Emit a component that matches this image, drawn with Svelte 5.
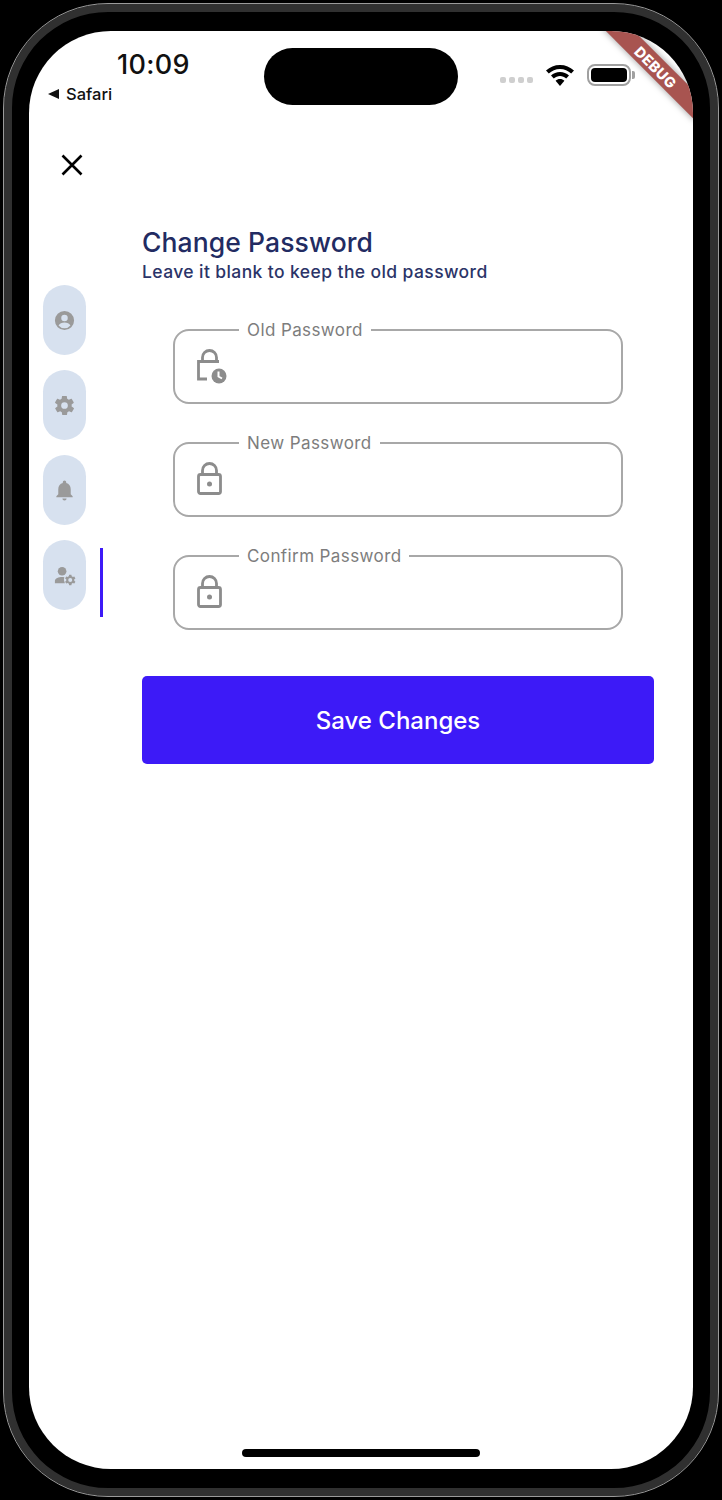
<script lang="ts">
	const tabs = ["profile", "settings", "bell", "admin"];
	const activeTab = "admin";
	const fields = [
		{ label: "Old Password", icon: "old" },
		{ label: "New Password", icon: "lock" },
		{ label: "Confirm Password", icon: "lock" },
	];
</script>

{#snippet tabIcon(key: string)}
	{#if key === "profile"}
		<svg viewBox="0 0 24 24"><path d="M12 2a10 10 0 1 0 0 20 10 10 0 0 0 0-20zm0 4a3.400 3.400 0 1 1 0 6.800A3.400 3.400 0 0 1 12 6zm0 14a8 8 0 0 1-6.200-2.900c.9-1.900 3.600-3 6.200-3s5.300 1.100 6.200 3A8 8 0 0 1 12 20z" /></svg>
	{:else if key === "settings"}
		<svg viewBox="0 0 24 24"><path d="M19.400 13c.05-.3.1-.65.1-1s-.05-.7-.1-1l2.100-1.650c.2-.15.25-.4.1-.65l-2-3.450c-.1-.2-.4-.3-.6-.2l-2.500 1c-.5-.4-1.100-.7-1.700-1l-.4-2.650c0-.2-.25-.4-.5-.4h-4c-.25 0-.45.2-.5.4l-.4 2.650c-.6.25-1.150.6-1.700 1l-2.500-1c-.2-.1-.5 0-.6.2l-2 3.450c-.1.25-.1.5.1.65L4.600 11c-.05.3-.1.650-.1 1s.05.7.1 1l-2.100 1.650c-.2.15-.25.4-.1.65l2 3.450c.1.2.4.3.6.2l2.500-1c.5.4 1.100.7 1.700 1l.4 2.650c.05.2.25.4.5.4h4c.25 0 .45-.2.5-.4l.4-2.650c.6-.25 1.150-.6 1.700-1l2.500 1c.2.1.5 0 .6-.2l2-3.450c.1-.25.1-.5-.1-.65zM12 15.500a3.500 3.500 0 1 1 0-7 3.500 3.500 0 0 1 0 7z" /></svg>
	{:else if key === "bell"}
		<svg viewBox="0 0 24 24"><path d="M12 22.500a2.200 2.200 0 0 0 2.200-2.200H9.800a2.200 2.200 0 0 0 2.200 2.200zM18.500 16v-5.400c0-3.200-1.700-5.800-4.700-6.500v-.7a1.800 1.800 0 0 0-3.600 0v.7c-3 .7-4.700 3.300-4.700 6.500V16L3.500 18v1h17v-1z" /></svg>
	{:else}
		<svg viewBox="0 0 24 24"><circle cx="9.500" cy="7.500" r="4.500" /><path d="M9.500 13.500c-3.500 0-7.500 1.700-7.500 3.800V20h10.400a7 7 0 0 1-.6-6.300c-.8-.15-1.600-.2-2.300-.2z" /><path fill-rule="evenodd" d="M22.200 16.700c0-.25 0-.45-.05-.7l1.250-1-1.200-2-1.500.5c-.35-.3-.75-.5-1.200-.65L19.200 11.300h-2.400l-.3 1.550c-.45.15-.85.35-1.200.65l-1.500-.5-1.200 2 1.250 1a4 4 0 0 0 0 1.400l-1.250 1 1.200 2 1.500-.5c.35.3.75.5 1.200.65l.3 1.550h2.400l.3-1.550c.45-.15.85-.35 1.200-.65l1.500.5 1.200-2-1.250-1c.05-.25.05-.45.05-.7zM18 18.800a2.100 2.100 0 1 1 0-4.200 2.100 2.100 0 0 1 0 4.200z" /></svg>
	{/if}
{/snippet}

<div class="device">
	<div class="bezel">
		<div class="screen">
			<div class="debug-banner"><span>DEBUG</span></div>

			<header class="status-bar">
				<div class="status-left">
					<span class="clock">10:09</span>
					<span class="back-app"><i class="back-arrow"></i>Safari</span>
				</div>
				<div class="island"></div>
				<div class="status-right">
					<span class="signal"><i></i><i></i><i></i><i></i></span>
					<svg class="wifi" viewBox="0 0 30 22">
						<path d="M15 1C9.500 1 5 3 1 6.500l2.800 3C6.800 6.800 10.700 5 15 5s8.200 1.800 11.200 4.500l2.800-3C25 3 20.500 1 15 1z" />
						<path d="M15 8c-3.500 0-6.600 1.300-9 3.500l2.800 3c1.700-1.500 3.900-2.500 6.200-2.500s4.500 1 6.200 2.500l2.800-3C21.600 9.300 18.500 8 15 8z" />
						<path d="M15 15c-1.700 0-3.200.6-4.400 1.700L15 22l4.400-5.300C18.200 15.600 16.700 15 15 15z" />
					</svg>
					<span class="battery"><i class="battery-level"></i></span>
					<i class="battery-cap"></i>
				</div>
			</header>

			<button class="close" type="button" aria-label="Close">
				<svg viewBox="0 0 24 24"><path d="M2.500 2.500l19 19M21.500 2.500l-19 19" /></svg>
			</button>

			<main class="layout">
				<nav class="side-nav">
					{#each tabs as tab}
						<div class="tab-row">
							<button class="tab" type="button" aria-label={tab}>
								{@render tabIcon(tab)}
							</button>
							{#if tab === activeTab}
								<span class="tab-marker"></span>
							{/if}
						</div>
					{/each}
				</nav>

				<section class="content">
					<h1>Change Password</h1>
					<p class="subtitle">Leave it blank to keep the old password</p>

					<div class="fields">
						{#each fields as field}
							<fieldset class="field">
								<legend>{field.label}</legend>
								{#if field.icon === "old"}
									<svg class="field-icon" viewBox="0 0 32 36">
										<path class="line" d="M12 32H3.500V14.500H24M7.500 14v-3.500a7 7 0 0 1 14 0V14" />
										<circle class="fill" cx="24" cy="29" r="7.500" />
										<path class="tick" d="M23.500 24.500v5l3.500 2" />
									</svg>
								{:else}
									<svg class="field-icon" viewBox="0 0 32 36">
										<rect class="line" x="3.500" y="14.500" width="22" height="19" rx="2" />
										<path class="line" d="M7.500 14v-3.500a7 7 0 0 1 14 0V14" />
										<circle class="fill" cx="14.500" cy="24" r="2.500" />
									</svg>
								{/if}
							</fieldset>
						{/each}
					</div>

					<button class="save" type="button">Save Changes</button>
				</section>
			</main>

			<div class="home-indicator"></div>
		</div>
	</div>
</div>

<style>
	:global(body) {
		margin: 0;
		background: #000;
	}

	.device {
		width: 722px;
		height: 1500px;
		box-sizing: border-box;
		padding: 3px;
		background: #000;
		font-family: "Inter", "Liberation Sans", sans-serif;
	}

	.bezel {
		height: 100%;
		box-sizing: border-box;
		padding: 27px 25px;
		border: 1px solid #9a9a9a;
		border-radius: 105px;
		background: #000;
		box-shadow: inset 0 0 0 8px #303030;
	}

	.screen {
		position: relative;
		display: flex;
		flex-direction: column;
		height: 100%;
		overflow: hidden;
		border-radius: 82px;
		background: #fff;
	}

	.debug-banner {
		position: absolute;
		top: 26px;
		right: -28px;
		width: 130px;
		height: 20px;
		display: flex;
		align-items: center;
		justify-content: center;
		background: #a85450;
		box-shadow: 0 0 7px rgba(0, 0, 0, 0.4);
		transform: rotate(45deg);
		color: #fff;
		font-size: 14.500px;
		font-weight: 800;
		letter-spacing: 0.4px;
	}

	.status-bar {
		display: flex;
		align-items: flex-start;
		height: 74px;
		flex-shrink: 0;
	}

	.status-left {
		display: flex;
		flex-direction: column;
		width: 235px;
		flex-shrink: 0;
		box-sizing: border-box;
		padding: 18px 0 0 19px;
	}

	.clock {
		margin-left: 69px;
		font-size: 27px;
		font-weight: 500;
		line-height: 31px;
		color: #111;
		letter-spacing: 0.3px;
	}

	.back-app {
		display: flex;
		align-items: center;
		gap: 7px;
		margin-top: 4px;
		font-size: 16.500px;
		font-weight: 500;
		line-height: 20px;
		color: #111;
	}

	.back-arrow {
		width: 0;
		height: 0;
		border-top: 5px solid transparent;
		border-bottom: 5px solid transparent;
		border-right: 11px solid #111;
	}

	.island {
		width: 194px;
		height: 57px;
		margin-top: 17px;
		flex-shrink: 0;
		border-radius: 29px;
		background: #000;
	}

	.status-right {
		display: flex;
		align-items: center;
		margin: 33px 0 0 42px;
	}

	.signal {
		display: flex;
		gap: 3px;
		margin-top: 10px;
	}

	.signal i {
		width: 6px;
		height: 6px;
		border-radius: 2px;
		background: #cfcfcf;
	}

	.wifi {
		width: 30px;
		height: 22px;
		margin-left: 12px;
		fill: #000;
	}

	.battery {
		display: flex;
		box-sizing: border-box;
		width: 44px;
		height: 22px;
		margin-left: 12px;
		padding: 2px;
		border: 2px solid #a0a0a0;
		border-radius: 8px;
	}

	.battery-level {
		flex: 1;
		border-radius: 4px;
		background: #000;
	}

	.battery-cap {
		width: 3px;
		height: 8px;
		margin-left: 1px;
		border-radius: 0 2px 2px 0;
		background: #a0a0a0;
	}

	.close {
		align-self: flex-start;
		width: 24px;
		height: 24px;
		margin: 48px 0 0 31px;
		padding: 0;
		border: 0;
		background: none;
	}

	.close svg {
		display: block;
		width: 24px;
		height: 24px;
		fill: none;
		stroke: #000;
		stroke-width: 2.600;
	}

	.layout {
		display: flex;
		align-items: flex-start;
		margin-top: 50px;
	}

	.side-nav {
		display: flex;
		flex-direction: column;
		gap: 15px;
		width: 113px;
		flex-shrink: 0;
		box-sizing: border-box;
		margin-top: 58px;
		padding-left: 14px;
	}

	.tab-row {
		position: relative;
		height: 70px;
	}

	.tab {
		display: flex;
		align-items: center;
		justify-content: center;
		width: 43px;
		height: 70px;
		padding: 0;
		border: 0;
		border-radius: 22px;
		background: #d7e1ef;
	}

	.tab svg {
		width: 23px;
		height: 23px;
		fill: #9a9a9a;
	}

	.tab-marker {
		position: absolute;
		left: 57px;
		top: 8px;
		width: 3px;
		height: 69px;
		background: #3d1af7;
	}

	.content {
		flex: 1;
		padding-right: 39px;
	}

	h1 {
		margin: 0;
		font-size: 26.500px;
		font-weight: 500;
		line-height: 30px;
		letter-spacing: 0.1px;
		color: #222b62;
	}

	.subtitle {
		margin: 4px 0 0;
		font-size: 17.500px;
		font-weight: 500;
		line-height: 22px;
		letter-spacing: 0.4px;
		color: #2b3468;
	}

	.fields {
		display: flex;
		flex-direction: column;
		gap: 40px;
		margin: 48px 31px 0;
	}

	.field {
		box-sizing: border-box;
		height: 85px;
		margin: -12px 0 0;
		padding: 0 0 0 22px;
		border: 2px solid #a8a8a8;
		border-radius: 16px;
		min-width: 0;
	}

	.field legend {
		margin-left: 42px;
		padding: 0 8px 0 8px;
		font-size: 17px;
		line-height: 22px;
		letter-spacing: 0.4px;
		color: #7d7d7d;
	}

	.field-icon {
		display: block;
		width: 32px;
		height: 36px;
		margin-top: 6px;
		margin-left: -2px;
		overflow: visible;
	}

	.field-icon .line {
		fill: none;
		stroke: #8c8c8c;
		stroke-width: 2.800;
	}

	.field-icon .fill {
		fill: #8c8c8c;
	}

	.field-icon .tick {
		fill: none;
		stroke: #fff;
		stroke-width: 2;
	}

	.save {
		display: block;
		width: 100%;
		height: 88px;
		margin-top: 46px;
		border: 0;
		border-radius: 5px;
		background: #3d1af7;
		color: #fff;
		font: inherit;
		font-size: 24px;
		font-weight: 500;
	}

	.home-indicator {
		position: absolute;
		left: 213px;
		bottom: 12px;
		width: 238px;
		height: 8px;
		border-radius: 4px;
		background: #000;
	}
</style>
